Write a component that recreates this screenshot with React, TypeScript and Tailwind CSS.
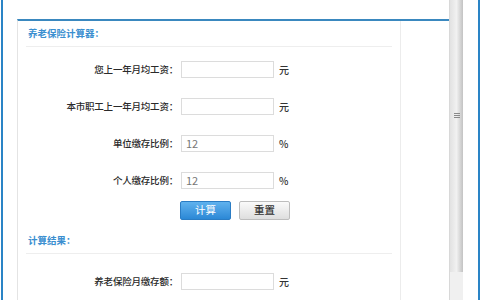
const font = { fontFamily: '"Noto Sans CJK SC", "Liberation Sans", sans-serif' };

type Row = { label: string; value?: string; unit: string };

const inputRows: Row[] = [
  { label: '您上一年月均工资：', unit: '元' },
  { label: '本市职工上一年月均工资：', unit: '元' },
  { label: '单位缴存比例：', value: '12', unit: '%' },
  { label: '个人缴存比例：', value: '12', unit: '%' },
];

const FormRow = ({ row }: { row: Row }) => (
  <div className="flex h-[37px] items-center">
    <div className="w-[160px] text-right text-[9.5px] font-medium tracking-[-0.2px] text-[#2a2a2a]">{row.label}</div>
    <div className="ml-[3px] flex h-[17px] w-[93px] items-center border border-[#dcdcdc] bg-white pl-[4px] text-[11px] text-[#777]">
      {row.value}
    </div>
    <span className="ml-[5px] text-[10px] font-medium text-[#333]">{row.unit}</span>
  </div>
);

const SectionTitle = ({ title }: { title: string }) => (
  <div className="mx-[8px] flex h-[26px] items-center border-b border-[#eeeeee] pl-[2px] text-[9.5px] font-bold text-[#3b8fd0]">
    {title}
  </div>
);

export default function App() {
  return (
    <div className="flex h-[300px] w-[480px] overflow-hidden bg-white" style={font}>
      <div className="ml-[1px] w-[2px] bg-[#2a84c6]" />
      <div className="w-[14px]" />
      <div className="flex w-[432px] flex-col">
        <div className="h-[21px]" />
        <div className="flex flex-1 border-t-2 border-l border-t-[#3a88bf] border-l-[#e4e4e4]">
          <div className="w-[383px] border-r border-[#ececec]">
            <SectionTitle title="养老保险计算器：" />
            <div className="pt-[4px]">
              {inputRows.map((r) => (
                <FormRow key={r.label} row={r} />
              ))}
            </div>
            <div className="flex h-[22px] items-center pl-[162px]">
              <button className="h-[19px] w-[51px] rounded-[2px] border border-[#2a7cc4] bg-gradient-to-b from-[#5fb2ee] to-[#2b88d6] text-[10.5px] text-white">
                计算
              </button>
              <button className="ml-[8px] h-[19px] w-[51px] rounded-[2px] border border-[#bdbdbd] bg-gradient-to-b from-[#fafafa] to-[#dedede] text-[10.5px] font-medium text-[#333]">
                重置
              </button>
            </div>
            <div className="mt-[7px]">
              <SectionTitle title="计算结果：" />
            </div>
            <div className="pt-[9px]">
              <FormRow row={{ label: '养老保险月缴存额：', unit: '元' }} />
            </div>
          </div>
          <div className="flex-1" />
        </div>
      </div>
      <div className="flex w-[14px] flex-col border-l border-[#d8d8d8]">
        <div className="relative h-[272px] bg-gradient-to-r from-[#e2e2e2] via-[#f1f1f1] to-[#c3c3c3]">
          <div className="absolute left-[4px] top-[113px] flex w-[6px] flex-col gap-[1px]">
            <div className="h-px bg-[#8a8a8a]" />
            <div className="h-px bg-[#8a8a8a]" />
            <div className="h-px bg-[#8a8a8a]" />
          </div>
        </div>
        <div className="flex-1 bg-[#f0f0f0]" />
      </div>
      <div className="w-[15px]" />
      <div className="w-[2px] bg-[#2a84c6]" />
    </div>
  );
}
